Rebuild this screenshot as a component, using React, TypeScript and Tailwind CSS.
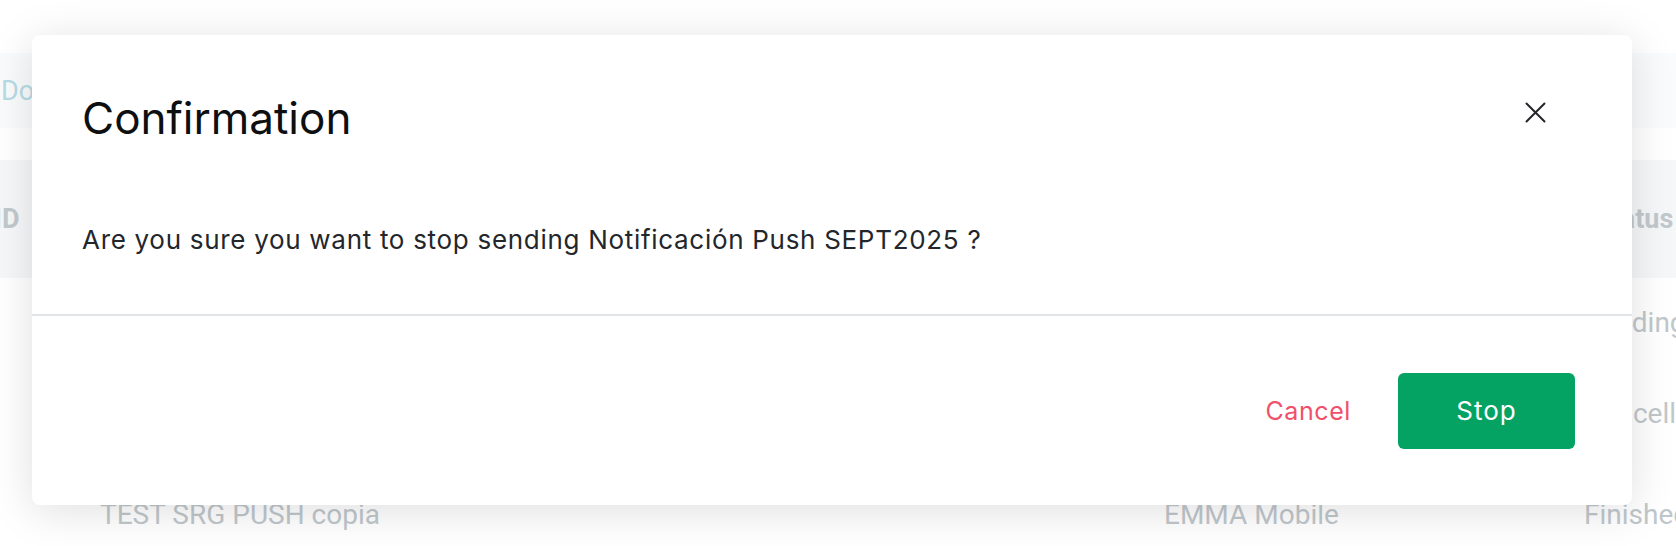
import React from "react";

function CloseIcon() {
  return (
    <svg width="21" height="21" viewBox="0 0 21 21" fill="none" stroke="#222529" strokeWidth="2" strokeLinecap="round">
      <path d="M1.5 1.5L19.5 19.5M19.5 1.5L1.5 19.5" />
    </svg>
  );
}

export default function App() {
  return (
    <div className="relative h-[546px] w-full overflow-hidden bg-white font-['Roboto',sans-serif]">
      {/* page behind the dialog */}
      <div className="h-[53px] bg-white" />
      <div className="flex h-[75px] items-center bg-[#fafbfc] pl-[1px] pt-[2px]">
        <span className="text-[27px] leading-none text-[#b7dce6]">Download</span>
      </div>
      <div className="h-[32px] bg-white" />
      <div className="flex h-[118px] items-center bg-[#f6f7f9] text-[27px] font-bold leading-none text-[#c2c9cc]">
        <div className="-ml-[6px] w-[106px] shrink-0">ID</div>
        <div className="w-[1064px] shrink-0">Name</div>
        <div className="w-[431px] shrink-0">Platform</div>
        <div className="shrink-0 whitespace-nowrap">Status</div>
      </div>
      <div className="flex h-[90px] items-center text-[28px] leading-none text-[#bfc7cb]">
        <div className="w-[100px] shrink-0" />
        <div className="w-[1064px] shrink-0">Notificación Push SEPT2025</div>
        <div className="w-[420px] shrink-0">EMMA Mobile</div>
        <div className="shrink-0 whitespace-nowrap">Pending</div>
      </div>
      <div className="flex h-[92px] items-center text-[28px] leading-none text-[#bfc7cb]">
        <div className="w-[100px] shrink-0" />
        <div className="w-[1064px] shrink-0">Push AGO2025</div>
        <div className="w-[420px] shrink-0">EMMA Mobile</div>
        <div className="shrink-0 whitespace-nowrap">Cancelled</div>
      </div>
      <div className="flex h-[110px] items-center text-[28px] leading-none text-[#bfc7cb]">
        <div className="w-[100px] shrink-0" />
        <div className="w-[1064px] shrink-0 whitespace-nowrap">TEST SRG PUSH copia</div>
        <div className="w-[420px] shrink-0">EMMA Mobile</div>
        <div className="shrink-0 whitespace-nowrap">Finished</div>
      </div>

      {/* dialog */}
      <div
        role="dialog"
        aria-labelledby="confirm-title"
        className="absolute left-[32px] top-[35px] flex h-[470px] w-[1600px] flex-col rounded-[8px] bg-white font-['Inter',sans-serif] shadow-[0_6px_44px_rgba(0,0,0,0.13)]"
      >
        <div className="flex items-start justify-between pl-[50px] pr-[86px] pt-[61px]">
          <h2 id="confirm-title" className="text-[44px] font-normal leading-none text-[#0d0f10]">
            Confirmation
          </h2>
          <button aria-label="Close" className="mt-[6px]">
            <CloseIcon />
          </button>
        </div>

        <p className="pb-[61px] pl-[50px] pt-[87px] text-[26px] leading-none tracking-[0.7px] text-[#23272b]">
          Are you sure you want to stop sending Notificación Push SEPT2025 ?
        </p>

        <div className="h-[2px] bg-[#e1e5e8]" />

        <div className="flex items-center justify-end gap-[47px] pr-[57px] pt-[57px]">
          <button className="text-[25px] leading-none tracking-[0.6px] text-[#f0506a]">Cancel</button>
          <button className="flex h-[76px] w-[177px] items-center justify-center rounded-[6px] bg-[#04a363] text-[26px] leading-none tracking-[1px] text-white">
            Stop
          </button>
        </div>
      </div>
    </div>
  );
}
